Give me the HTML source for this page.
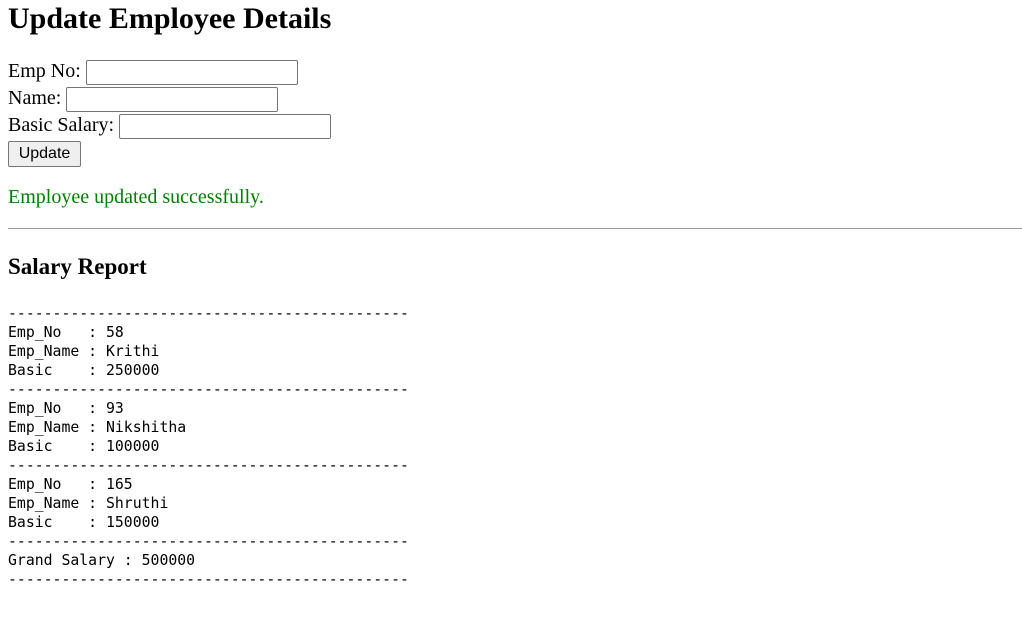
<!DOCTYPE html>
<html><head><style>
body{margin:0 8px;font-family:"Liberation Serif",serif;font-size:20px;color:#000;background:#fff}
h1{margin:0 0 21px;font-size:30px;line-height:37px}
form{line-height:26.5px;font-size:20px}
input[type=text]{width:212px;height:25px;box-sizing:border-box;border:1px solid #767676;border-radius:2px;padding:1px 2px;font-size:13px;vertical-align:baseline;margin:0}
button{font-family:"Liberation Sans",sans-serif;font-size:16px;height:26px;width:73px;padding:1px 6px;border:1px solid #767676;border-radius:2px;background:#efefef;margin:2px 0 0}
p.msg{color:green;margin:19px 0 19px;font-size:20px}
hr{border:0;border-top:1px solid #999;margin:0 -8px 0 0;}
h3{font-size:23px;margin:25px 0 24px}
pre{font-family:"DejaVu Sans Mono",monospace;font-size:14.8px;line-height:19px;margin:0}
</style></head><body>
<h1>Update Employee Details</h1>
<form>
Emp No: <input type="text"><br>
Name: <input type="text"><br>
Basic Salary: <input type="text"><br>
<button type="button">Update</button>
</form>
<p class="msg">Employee updated successfully.</p>
<hr>
<h3>Salary Report</h3>
<pre>---------------------------------------------
Emp_No   : 58
Emp_Name : Krithi
Basic    : 250000
---------------------------------------------
Emp_No   : 93
Emp_Name : Nikshitha
Basic    : 100000
---------------------------------------------
Emp_No   : 165
Emp_Name : Shruthi
Basic    : 150000
---------------------------------------------
Grand Salary : 500000
---------------------------------------------</pre>
</body></html>
